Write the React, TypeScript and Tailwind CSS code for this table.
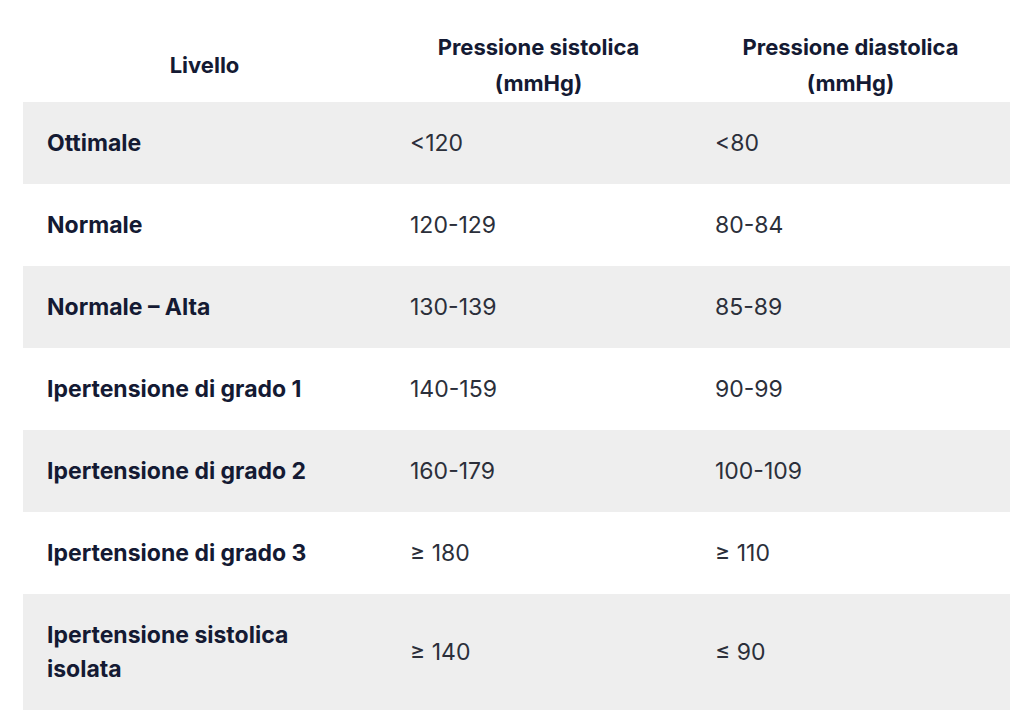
const rows = [
  { level: 'Ottimale', sys: '<120', dia: '<80' },
  { level: 'Normale', sys: '120-129', dia: '80-84' },
  { level: 'Normale – Alta', sys: '130-139', dia: '85-89' },
  { level: 'Ipertensione di grado 1', sys: '140-159', dia: '90-99' },
  { level: 'Ipertensione di grado 2', sys: '160-179', dia: '100-109' },
  { level: 'Ipertensione di grado 3', sys: '≥ 180', dia: '≥ 110' },
  { level: 'Ipertensione sistolica isolata', sys: '≥ 140', dia: '≤ 90' },
];

export default function App() {
  return (
    <div className="w-[1024px] h-[716px] bg-white pl-[23px] pr-[14px] font-['Inter',sans-serif] text-[23px] leading-[34px]">
      <table className="w-full border-collapse table-fixed">
        <colgroup>
          <col className="w-[363px]" />
          <col className="w-[305px]" />
          <col />
        </colgroup>
        <thead>
          <tr className="h-[102px]">
            <th className="px-2 pt-[29px] pb-px text-center align-middle font-bold text-[22px] leading-[36px] text-[#141a33]">Livello</th>
            <th className="px-2 pt-[29px] pb-px text-center align-middle font-bold text-[22px] leading-[36px] text-[#141a33]">
              Pressione sistolica
              <br />
              (mmHg)
            </th>
            <th className="px-2 pt-[29px] pb-px text-center align-middle font-bold text-[22px] leading-[36px] text-[#141a33]">
              Pressione diastolica
              <br />
              (mmHg)
            </th>
          </tr>
        </thead>
        <tbody>
          {rows.map((r, i) => (
            <tr key={r.level} className={i % 2 === 0 ? 'bg-[#eeeeee]' : 'bg-white'}>
              <td className="px-6 py-6 font-bold text-[#141a33] align-middle">
                {r.level === 'Ipertensione sistolica isolata' ? (
                  <>
                    Ipertensione sistolica
                    <br />
                    isolata
                  </>
                ) : (
                  r.level
                )}
              </td>
              <td className="px-6 py-6 text-[#2b2f3a] align-middle">{r.sys}</td>
              <td className="px-6 py-6 text-[#2b2f3a] align-middle">{r.dia}</td>
            </tr>
          ))}
        </tbody>
      </table>
    </div>
  );
}
